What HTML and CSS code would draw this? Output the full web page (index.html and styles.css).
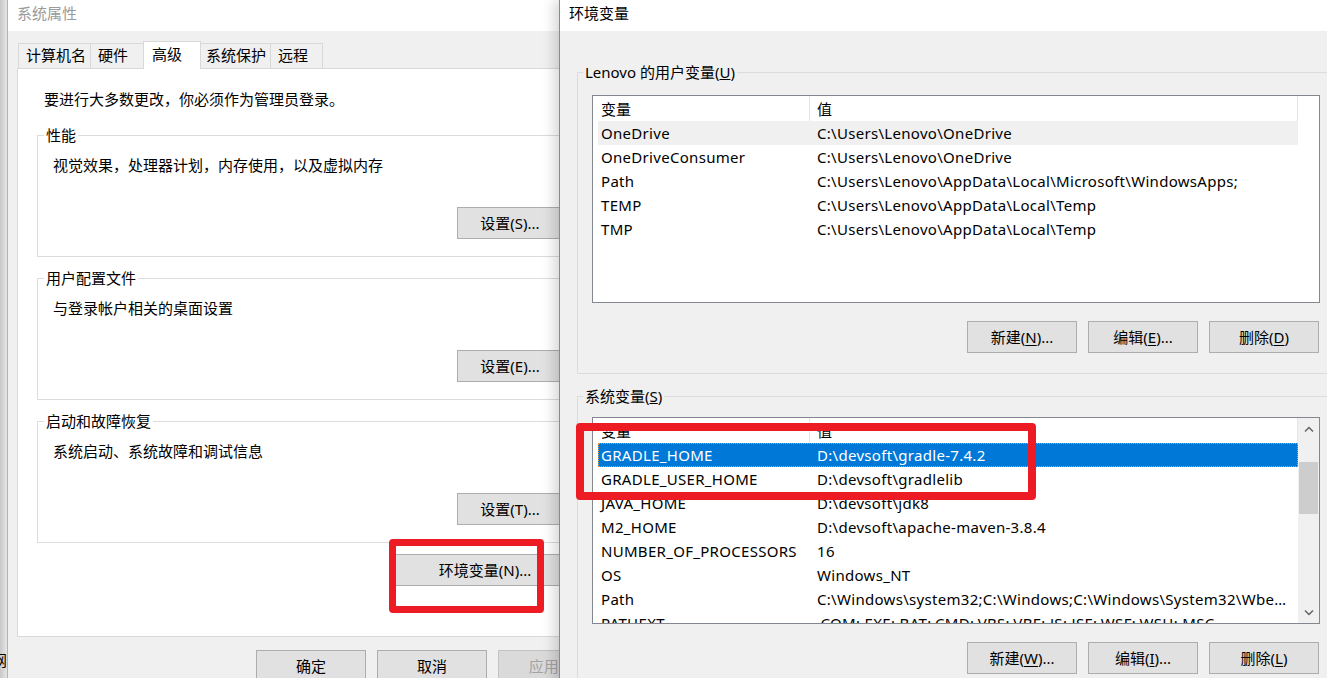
FILE: index.html
```html
<!DOCTYPE html>
<html lang="zh-CN">
<head>
    <meta charset="UTF-8">
    <title>系统属性 - 环境变量</title>
    <link rel="stylesheet" href="styles.css">
</head>
<body>
<div class="desktop">
    <span class="bg-glyph">网</span>

    <!-- 系统属性 dialog (inactive, behind) -->
    <div class="window sys-window">
        <div class="titlebar inactive">系统属性</div>
        <div class="sys-body">
            <div class="tabs">
                <div class="tab tab-name">计算机名</div>
                <div class="tab tab-hw">硬件</div>
                <div class="tab active">高级</div>
                <div class="tab tab-prot">系统保护</div>
                <div class="tab tab-remote">远程</div>
            </div>
            <div class="tab-panel">
                <p class="notice">要进行大多数更改，你必须作为管理员登录。</p>

                <fieldset class="group sys-group">
                    <legend>性能</legend>
                    <p class="group-desc">视觉效果，处理器计划，内存使用，以及虚拟内存</p>
                    <div class="group-actions"><button class="btn btn-set">设置(S)...</button></div>
                </fieldset>

                <fieldset class="group sys-group">
                    <legend>用户配置文件</legend>
                    <p class="group-desc">与登录帐户相关的桌面设置</p>
                    <div class="group-actions"><button class="btn btn-set">设置(E)...</button></div>
                </fieldset>

                <fieldset class="group sys-group">
                    <legend>启动和故障恢复</legend>
                    <p class="group-desc">系统启动、系统故障和调试信息</p>
                    <div class="group-actions"><button class="btn btn-set">设置(T)...</button></div>
                </fieldset>

                <div class="env-row"><button class="btn btn-env">环境变量(N)...</button></div>
            </div>
            <div class="dialog-actions">
                <button class="btn">确定</button>
                <button class="btn">取消</button>
                <button class="btn" disabled>应用(A)</button>
            </div>
        </div>
    </div>

    <!-- 环境变量 dialog (active, front) -->
    <div class="window env-window">
        <div class="titlebar">环境变量</div>
        <div class="env-body">
            <fieldset class="group env-group">
                <legend>Lenovo 的用户变量(<u>U</u>)</legend>
                <div class="var-list user-list">
                    <div class="var-table">
                        <div class="var-row var-head"><span class="c-name">变量</span><span class="c-val">值</span></div>
                        <div class="var-row hover"><span class="c-name">OneDrive</span><span class="c-val">C:\Users\Lenovo\OneDrive</span></div>
                        <div class="var-row"><span class="c-name">OneDriveConsumer</span><span class="c-val">C:\Users\Lenovo\OneDrive</span></div>
                        <div class="var-row"><span class="c-name">Path</span><span class="c-val">C:\Users\Lenovo\AppData\Local\Microsoft\WindowsApps;</span></div>
                        <div class="var-row"><span class="c-name">TEMP</span><span class="c-val">C:\Users\Lenovo\AppData\Local\Temp</span></div>
                        <div class="var-row"><span class="c-name">TMP</span><span class="c-val">C:\Users\Lenovo\AppData\Local\Temp</span></div>
                    </div>
                </div>
                <div class="list-actions">
                    <button class="btn">新建(<u>N</u>)...</button>
                    <button class="btn">编辑(<u>E</u>)...</button>
                    <button class="btn">删除(<u>D</u>)</button>
                </div>
            </fieldset>

            <fieldset class="group env-group">
                <legend>系统变量(<u>S</u>)</legend>
                <div class="var-list sys-list">
                    <div class="var-table">
                        <div class="var-row var-head"><span class="c-name">变量</span><span class="c-val">值</span></div>
                        <div class="var-row selected"><span class="c-name">GRADLE_HOME</span><span class="c-val">D:\devsoft\gradle-7.4.2</span></div>
                        <div class="var-row"><span class="c-name">GRADLE_USER_HOME</span><span class="c-val">D:\devsoft\gradlelib</span></div>
                        <div class="var-row"><span class="c-name">JAVA_HOME</span><span class="c-val">D:\devsoft\jdk8</span></div>
                        <div class="var-row"><span class="c-name">M2_HOME</span><span class="c-val">D:\devsoft\apache-maven-3.8.4</span></div>
                        <div class="var-row"><span class="c-name">NUMBER_OF_PROCESSORS</span><span class="c-val">16</span></div>
                        <div class="var-row"><span class="c-name">OS</span><span class="c-val">Windows_NT</span></div>
                        <div class="var-row"><span class="c-name">Path</span><span class="c-val">C:\Windows\system32;C:\Windows;C:\Windows\System32\Wbem;C:\Windows\System32\WindowsPowerShell\v1.0\</span></div>
                        <div class="var-row"><span class="c-name">PATHEXT</span><span class="c-val">.COM;.EXE;.BAT;.CMD;.VBS;.VBE;.JS;.JSE;.WSF;.WSH;.MSC</span></div>
                    </div>
                    <div class="scrollbar">
                        <div class="sb-arrow">
                            <svg width="10" height="6" viewBox="0 0 10 6"><polyline points="1,5.5 5,1.5 9,5.5" fill="none" stroke="#606060" stroke-width="1.4"/></svg>
                        </div>
                        <div class="sb-track"><div class="sb-thumb"></div></div>
                        <div class="sb-arrow">
                            <svg width="10" height="6" viewBox="0 0 10 6"><polyline points="1,0.5 5,4.5 9,0.5" fill="none" stroke="#606060" stroke-width="1.4"/></svg>
                        </div>
                    </div>
                </div>
                <div class="list-actions">
                    <button class="btn">新建(<u>W</u>)...</button>
                    <button class="btn">编辑(<u>I</u>)...</button>
                    <button class="btn">删除(<u>L</u>)</button>
                </div>
            </fieldset>
        </div>
    </div>

    <!-- red annotation frames -->
    <div class="mark mark-env-btn"></div>
    <div class="mark mark-gradle"></div>
</div>
</body>
</html>
```

FILE: styles.css
```css
* { box-sizing: border-box; }
html, body { margin: 0; padding: 0; }
body {
    font-family: "Noto Sans", "Noto Sans CJK SC", sans-serif;
    font-size: 15px;
    color: #000;
    background: #d4d4d4;
}

.desktop {
    position: relative;
    width: 1327px;
    height: 678px;
    overflow: hidden;
    background: linear-gradient(to right, #c8c8c8, #e2e2e2 6px, #d6d6d6);
}
.bg-glyph { position: absolute; left: -8px; top: 650px; line-height: 20px; }

/* Windows */
.window { position: absolute; top: 0; height: 720px; background: #f0f0f0; }
.titlebar { height: 31px; background: #fff; padding: 3px 0 0 9px; line-height: 20px; white-space: nowrap; }
.titlebar.inactive { color: #9a9a9a; }

.btn {
    font: inherit;
    flex: none;
    height: 32px;
    padding: 0;
    border: 1px solid #adadad;
    background: #e1e1e1;
    color: #000;
    line-height: 30px;
    white-space: nowrap;
}
.btn:disabled { color: #a3a3a3; background: #dadada; border-color: #c2c2c2; }
.btn u { text-decoration-thickness: 1px; text-underline-offset: 2px; }

/* Group boxes */
.group { margin: 0; padding: 0; border: 1px solid #dcdcdc; min-width: 0; }
.group legend { margin-left: 6px; padding: 0 2px; line-height: 20px; white-space: nowrap; }

/* System properties */
.sys-window { left: 7px; width: 620px; border-left: 1px solid #b4b4b4; }
.sys-body { padding: 10px 0 0 9px; }

.tabs { display: flex; align-items: flex-end; height: 27px; margin-left: 1px; }
.tab {
    height: 25px;
    line-height: 23px;
    padding-left: 7px;
    border: 1px solid #d9d9d9;
    border-bottom: 0;
    background: #f0f0f0;
    margin-right: -1px;
    white-space: nowrap;
}
.tab-name { width: 73px; }
.tab-hw { width: 55px; margin-right: -2px; }
.tab.active {
    position: relative;
    z-index: 1;
    width: 58px;
    height: 28px;
    line-height: 24px;
    padding-left: 8px;
    margin-right: -3px;
    margin-bottom: -1px;
    background: #fff;
}
.tab-prot { width: 73px; }
.tab-remote { width: 53px; }

.tab-panel {
    width: 560px;
    height: 569px;
    background: #fff;
    border: 1px solid #d9d9d9;
    padding: 20px 0 0 19px;
}
.notice { margin: 0 0 16px 7px; line-height: 20px; }

.sys-group { width: 530px; margin-bottom: 11px; }
.group-desc { margin: 10px 0 0 15px; line-height: 20px; }
.group-actions { display: flex; justify-content: flex-end; margin: 32px 3px 17px 0; }
.btn-set { width: 106px; }

.env-row { margin: 9px 0 0 355px; }
.btn-env { width: 186px; }

.dialog-actions { display: flex; gap: 11px; margin: 13px 0 0 239px; }
.dialog-actions .btn { width: 110px; }

/* Environment variables */
.env-window {
    left: 559px;
    width: 790px;
    border-left: 1px solid #8a8a8a;
    box-shadow: -5px 0 12px rgba(0, 0, 0, 0.16);
}
.env-body { padding: 31px 0 0 17px; }
.env-group { width: 760px; margin-bottom: 12px; }
.env-group legend { margin-left: 5px; }

.var-list {
    display: flex;
    width: 728px;
    height: 208px;
    margin: 13px 0 0 14px;
    padding-left: 5px;
    border: 1px solid #828790;
    background: #fff;
    overflow: hidden;
}
.sys-list { margin-top: 11px; height: 207px; }

.var-table { width: 700px; flex: none; }
.var-row { display: flex; height: 24px; line-height: 24px; white-space: nowrap; letter-spacing: 0.3px; }
.var-head { height: 25px; line-height: 23px; padding-top: 2px; letter-spacing: 0; }
.c-name { width: 212px; flex: none; padding-left: 3px; overflow: hidden; }
.c-val { flex: 1; min-width: 0; padding-left: 7px; overflow: hidden; text-overflow: ellipsis; }
.var-head .c-name { border-right: 1px solid #e5e5e5; margin-top: -2px; padding-top: 2px; }
.var-head .c-val { border-right: 1px solid #e5e5e5; margin-top: -2px; padding-top: 2px; }
.var-row.hover { background: #f0f0f0; }
.var-row.selected { background: #0078d7; color: #fff; outline: 1px dotted #f09a3c; outline-offset: -1px; }

.scrollbar { width: 21px; margin-left: auto; display: flex; flex-direction: column; background: #f0f0f0; }
.sb-arrow { height: 21px; display: flex; align-items: center; justify-content: center; }
.sb-track { flex: 1; }
.sb-thumb { height: 52px; margin: 23px 1px 0; background: #cdcdcd; }

.list-actions { display: flex; justify-content: flex-end; gap: 11px; width: 727px; margin: 18px 0 20px 14px; }
.list-actions .btn { width: 110px; }

/* Annotation frames */
.mark { position: absolute; z-index: 5; border: 7px solid #ed1c24; border-radius: 4px; }
.mark-env-btn { left: 389px; top: 539px; width: 155px; height: 74px; }
.mark-gradle { left: 576px; top: 423px; width: 460px; height: 77px; border-width: 8px; }
```
